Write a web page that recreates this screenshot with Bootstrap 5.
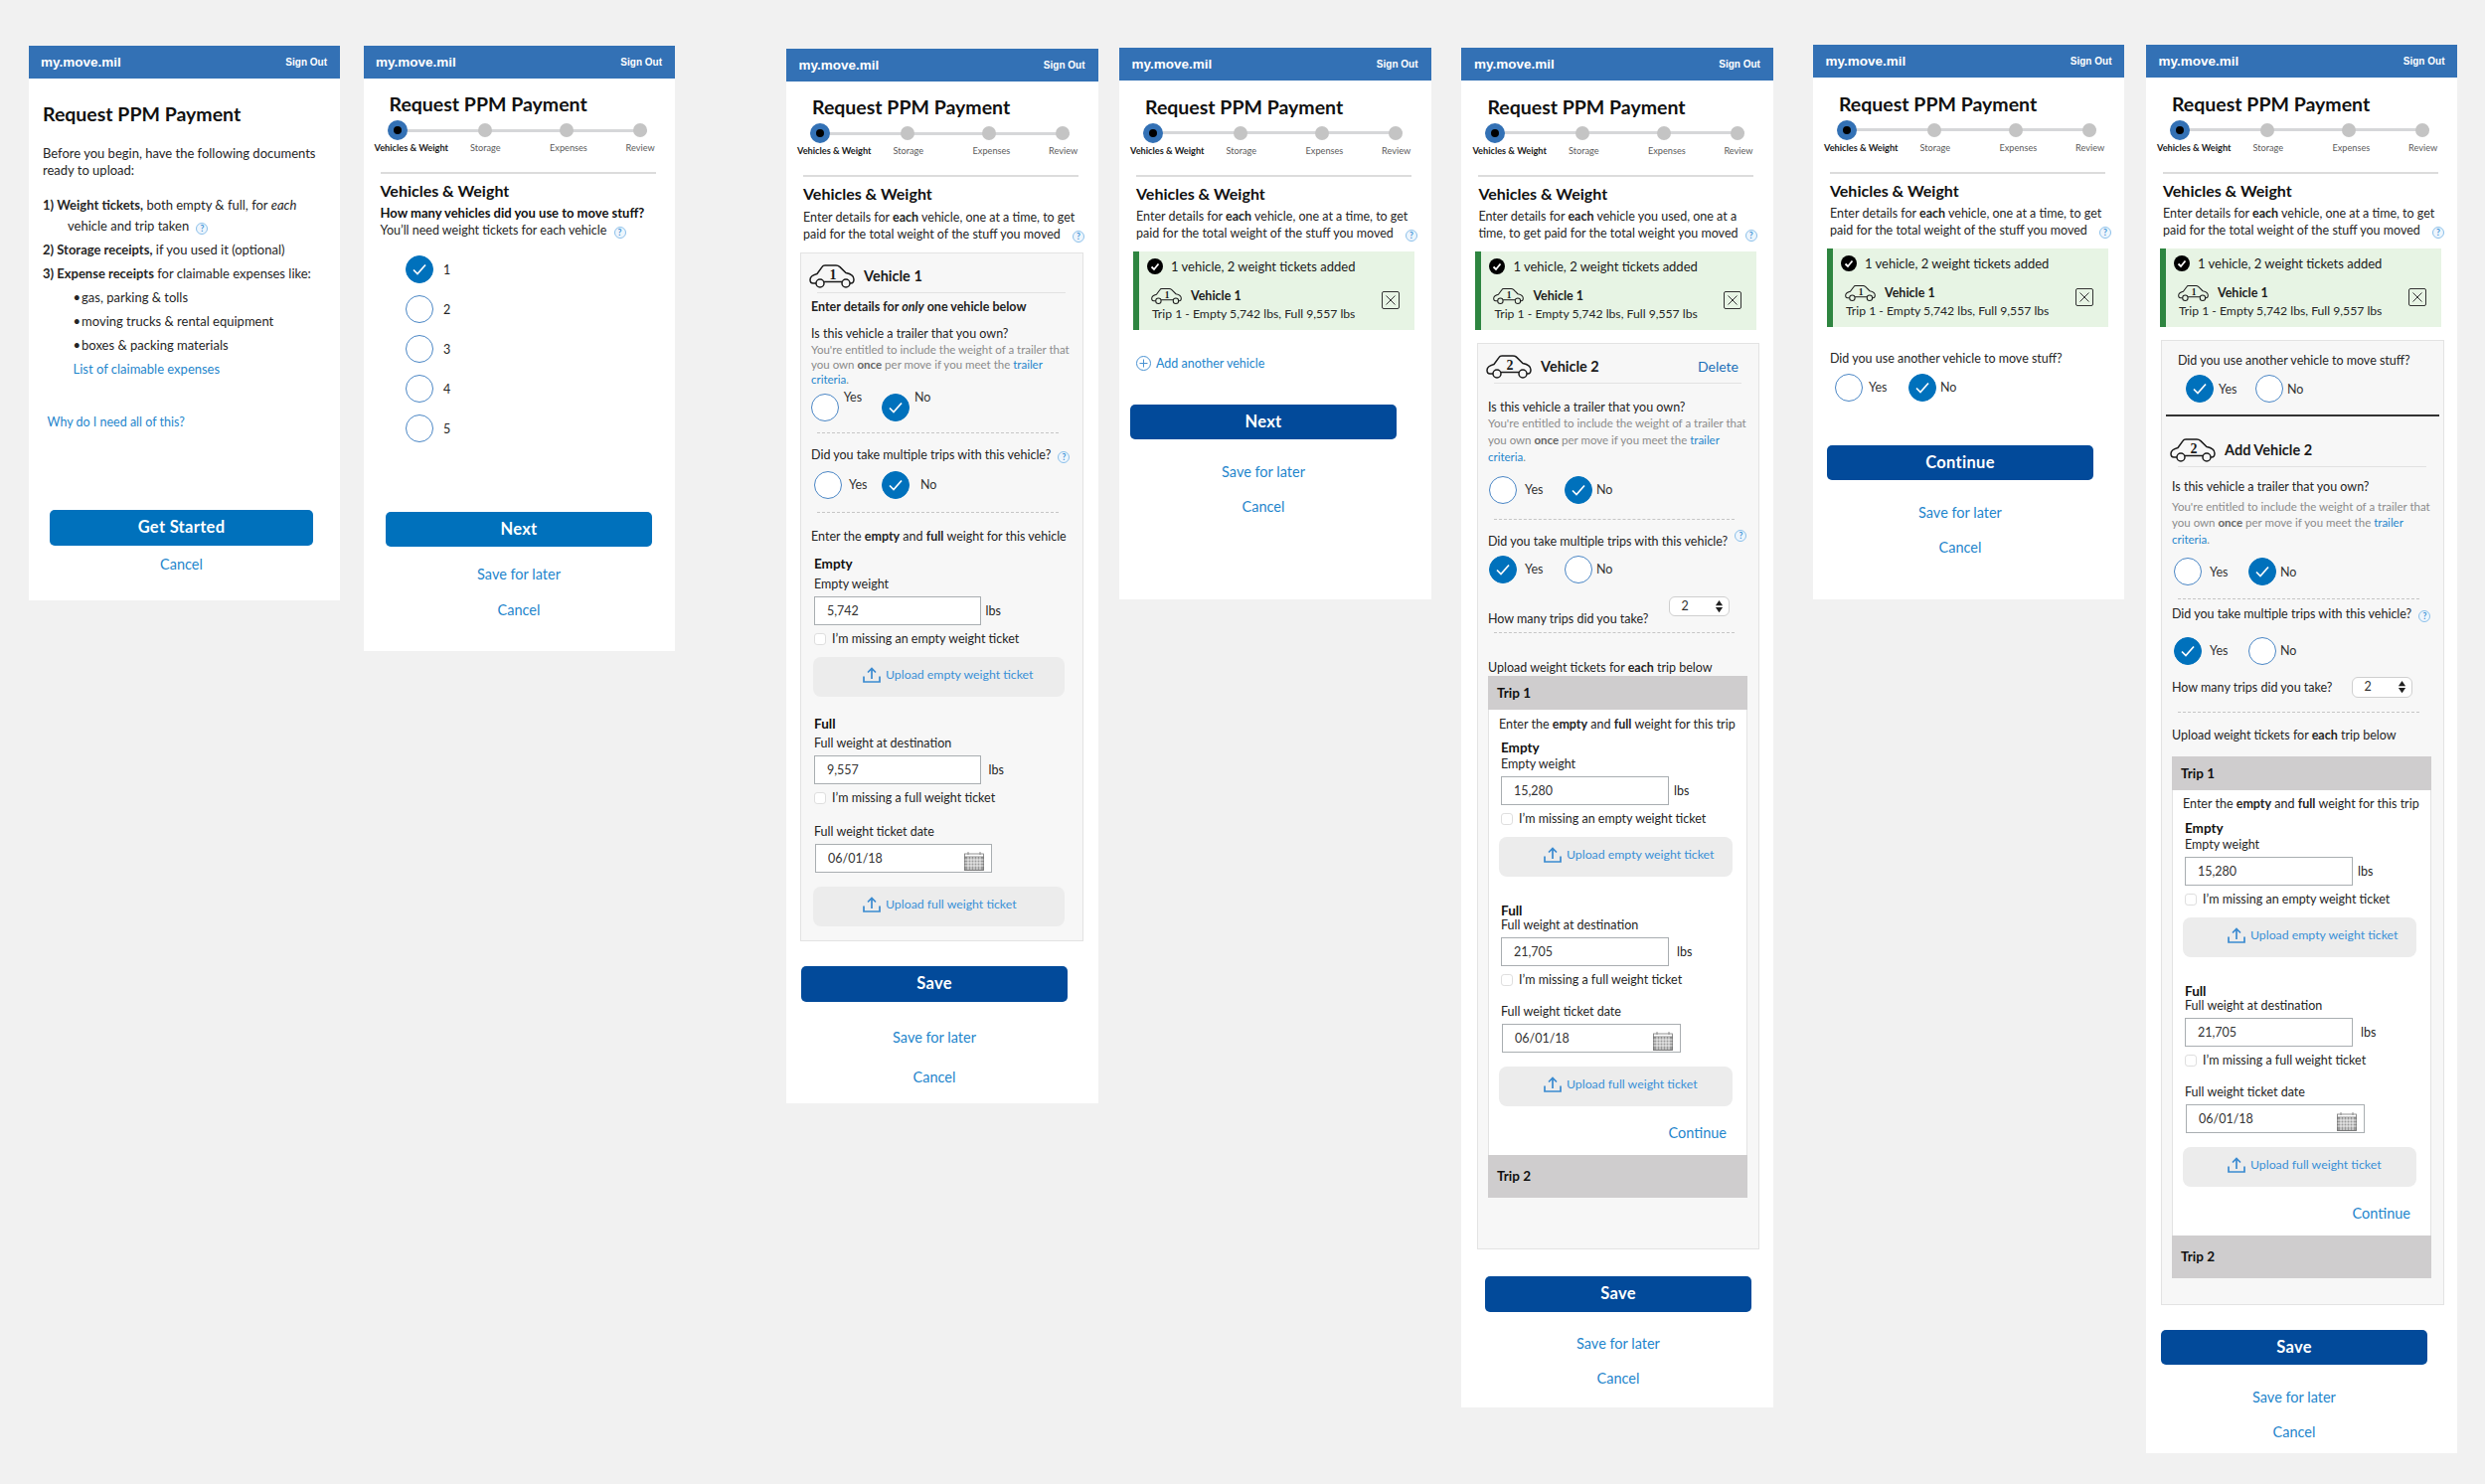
<!DOCTYPE html>
<html lang="en">
<head>
<meta charset="UTF-8">
<title>Request PPM Payment</title>
<link href="https://cdn.jsdelivr.net/npm/bootstrap@5.3.0/dist/css/bootstrap.min.css" rel="stylesheet">
<style>
html, body { background: #f1f1f1; }
body { font-family: Lato, "Noto Sans", sans-serif; font-size: 12.5px; line-height: 17px; color: #252525; }
a { color: #1f86cc; text-decoration: none; }
.board { display: flex; align-items: flex-start; width: 2500px; height: 1493px; overflow: hidden; }
.phone { flex: none; width: 313.5px; background: #fff; }
#s1 { margin: 46px 0 0 28.5px; min-height: 558px; }
#s2 { margin: 45.5px 0 0 23.5px; min-height: 609.5px; }
#s3 { margin: 48.5px 0 0 112px; min-height: 1061.5px; }
#s4 { margin: 48px 0 0 21.5px; min-height: 555px; }
#s5 { margin: 48px 0 0 30.9px; min-height: 1368px; }
#s6 { margin: 45px 0 0 40.1px; min-height: 558px; }
#s7 { margin: 45px 0 0 21.5px; min-height: 1417px; }
.topbar { height: 33px; background: #3371b5; padding: 0 13px 0 12.5px; font-family: "Liberation Sans", Arial, sans-serif; font-weight: 700; flex-wrap: nowrap; }
.brand-txt { color: #fff; font-size: 13.5px; }
.out-txt { color: #fff; font-size: 10px; }
.pay-title { font-size: 19.5px; line-height: 24px; font-weight: 700; margin: 14.5px 0 0 26px; color: #111; }
.steps { display: flex; align-items: center; height: 20px; width: 261px; margin: 4px 0 0 24px; background: linear-gradient(#d6d7d9, #d6d7d9) center / 100% 3px no-repeat; }
.node { flex: none; width: 14px; height: 14px; border-radius: 50%; background: #c4c4c4; }
.node-a { width: 20px; height: 20px; background: #000; border: 6px solid #3371b5; }
.node-b { margin-left: 71px; }
.node-c { margin-left: 68px; }
.node-d { margin-left: 60px; }
.step-names { display: flex; margin: 2px 0 0 11px; font-size: 9.2px; line-height: 12px; color: #5b5b5b; }
.step-names b { width: 96.5px; color: #1b1b1b; }
.step-names span:nth-child(2) { width: 80px; }
.step-names span:nth-child(3) { width: 76.5px; }
.rule-top { margin: 18px 19.5px 0 17px; height: 2px; background: #dcdcdc; }
.sec-title { font-size: 16px; line-height: 20px; font-weight: 700; margin: 7px 0 0 17px; color: #111; }
.sec-text { margin: 4.5px 0 0 17px; width: 290px; }
.hint { display: inline-flex; align-items: center; justify-content: center; width: 12px; height: 12px; margin-left: 4px; border: 1px solid #8cc0ea; border-radius: 50%; color: #3e93d6; font-size: 8.5px; line-height: 1; font-weight: 700; vertical-align: -1px; background: #eef6fd; }
.hint-gap { margin-left: 9px; }
.hint-up { position: relative; top: -8px; }

/* start screen */
.intro-title { margin: 24px 0 0 14.5px; }
.intro-text { margin: 19px 0 0 14.5px; width: 290px; font-size: 13px; }
.intro-list { list-style: none; margin: 18px 0 0 14.5px; padding: 0; font-size: 13px; }
.intro-list li { margin-bottom: 7px; }
.intro-list .wrap-line { display: block; margin: 3.5px 0 0 25px; }
.sub-list { margin: 0 0 0 45px; font-size: 13px; }
.sub-list p { margin: 0 0 7px; }
.sub-list p::before { content: "\2022"; margin-right: 1px; }
.why-link { display: block; margin: 36px 0 0 19px; }
.go-btn.s1-go { margin: 80.5px 0 0 21.5px; width: 265px; }
.s1-cancel { display: block; margin: 10.5px 0 0 21.5px; width: 265px; text-align: center; font-size: 14.5px; }

/* vehicle count */
.s2-q { margin: 4px 0 0 17px; }
.s2-q b { color: #111; font-size: 13px; }
.count-list { margin: 17px 0 0 42.5px; }
.count-item { display: flex; align-items: center; gap: 10px; height: 28px; margin-bottom: 12px; }

/* radios */
.form-check-input.pick { width: 28px; height: 28px; margin: 0; flex: none; float: none; border: 1.5px solid #4a86c5; background-color: #fff; }
.form-check-input.pick:checked { background-color: #0071bc; border-color: #0071bc; background-size: 16px; background-image: url("data:image/svg+xml,%3csvg xmlns='http://www.w3.org/2000/svg' viewBox='0 0 16 16'%3e%3cpath fill='none' stroke='%23fff' stroke-width='1.7' d='M2 8.5l4 4 8-9'/%3e%3c/svg%3e"); }
.choices { display: flex; align-items: center; }
.choice { display: flex; align-items: center; flex: none; color: #333; }
.cg-v1a { margin: 6.5px 0 0 9.7px; }
.cg-v1a .choice:first-child { width: 71.3px; gap: 5px; }
.cg-v1a .choice span { align-self: flex-start; margin-top: -5px; }
.cg-v1a .choice:last-child { gap: 5px; }
.cg-v1b { margin: 7.5px 0 0 13px; }
.cg-v1b .choice:first-child { width: 68px; gap: 7px; }
.cg-v1b .choice:last-child { gap: 11px; }
.cg-v2 { margin: 10.5px 0 0 11px; }
.cg-v2 .choice:first-child { width: 76px; gap: 8px; }
.cg-v2 .choice:last-child { gap: 4px; }
.cg-v2b { margin-top: 5.6px; }
.cg-bare { margin: 6.5px 0 0 22px; }
.cg-bare .choice:first-child { width: 74px; gap: 6px; }
.cg-bare .choice:last-child { gap: 4px; }
.cg-q { margin: 6.5px 0 0 24px; }
.cg-q .choice:first-child { width: 70px; gap: 5px; }
.cg-q .choice:last-child { gap: 4px; }
.cg-a7 { margin: 9.5px 0 0 12px; }
.cg-a7 .choice:first-child { width: 75px; gap: 8px; }
.cg-a7 .choice:last-child { gap: 4px; }
.cg-a7b { margin-top: 14.5px; }

/* added vehicle summary */
.added { width: 283px; height: 79px; margin: 9.5px 0 0 14px; padding: 7px 15px 0 8px; background: #e7f4e4; border-left: 6px solid #2e8540; }
.added-head { display: flex; align-items: center; gap: 8px; font-size: 13px; color: #1b1b1b; }
.added-body { display: flex; justify-content: space-between; margin-top: 12px; }
.added-car { display: flex; align-items: center; gap: 9px; height: 18px; margin-left: 4px; font-weight: 700; color: #1b1b1b; }
.added-car .car { width: 31px; height: 18px; }
.added-trip { margin: 1px 0 0 5px; font-size: 12.2px; line-height: 16px; white-space: nowrap; }
.x-box { flex: none; margin-top: 4px; }

/* vehicle form */
.veh-box { margin-top: 10.5px; width: 285px; background: #f7f7f7; border: 1px solid #e3e3e3; }
.s3-box { margin-left: 14px; padding-bottom: 13.5px; }
.s5-box { margin: 13.5px 0 0 15.6px; width: 284px; height: 912px; }
.s7-box { margin: 13px 0 0 15px; height: 971px; }
.veh-row { display: flex; align-items: center; height: 24px; margin: 10.5px 0 0 8px; gap: 9px; font-size: 14.5px; font-weight: 700; color: #1b1b1b; }
.car { width: 46px; height: 24px; flex: none; }
.del-link { margin-left: auto; margin-right: 20px; font-size: 14px; font-weight: 400; color: #1c6fb8; }
.rule-soft { height: 1.5px; margin: 4px 17px 0 16px; background: #e2e2e2; }
.only-txt { margin: 5px 0 0 10px; font-weight: 700; color: #222; }
.qline { margin: 9.5px 0 0 10px; white-space: nowrap; }
.s5-q1 { margin-top: 15px; }
.note { margin: 0 0 0 10px; width: 268px; font-size: 11.5px; line-height: 15.3px; color: #8b8b8b; }
.note b { color: #666; }
.note-lg { line-height: 16.7px; }
.dash { height: 0; margin: 11px 24px 0 16px; border-top: 1px dashed #c6c6c6; }
.dash-wide { margin-top: 15px; }
.dash-13 { margin-top: 13px; }
.dash-5 { margin-top: 5px; }
.q-next { margin-top: 13px; }
.q-v2 { margin-top: 13px; }
.q-a7 { margin-top: 5.5px; }
.q-lead { margin-top: 15px; }
.count-row { display: flex; align-items: flex-end; margin: 13px 0 0 10px; }
.count-row .form-select { width: 61px; height: 20.5px; margin: 0 0 11px 21px; padding: 0 0 0 11px; font-size: 12.5px; line-height: 18px; border: 1px solid #cfcfcf; color: #333; background-color: #fff; background-position: right 5px center; background-size: 9px; background-image: url("data:image/svg+xml,%3csvg xmlns='http://www.w3.org/2000/svg' viewBox='0 0 10 16'%3e%3cpath fill='%23222' d='M5 1l4 6H1zM5 15l4-6H1z'/%3e%3c/svg%3e"); }
.count-a7 { align-items: center; margin-top: 12.5px; }
.count-a7 .form-select { margin: 0 0 0 20px; }
.up-lead { margin: 26px 0 0 10px; }
.up-a7 { margin-top: 14px; }
.dash-a7 { margin-top: 14.5px; }

/* trip panels */
.trip-wrap { margin-left: 10px; width: 261px; }
.trip-bar { height: 34px; padding-left: 9px; line-height: 34px; font-size: 13.5px; font-weight: 700; color: #111; background: #cfcdce; }
.trip-bar2 { height: 43px; line-height: 43px; margin-top: 0; }
.trip-body { background: #fff; border: solid #e3e3e3; border-width: 0 1px; padding-bottom: 13px; }
.trip-lead { margin: 0; padding: 5.5px 0 0 10px; white-space: nowrap; }
.a7-up { margin-top: 12.5px; }
.cont-link { display: block; margin: 18px 20px 0 0; text-align: right; font-size: 14.5px; line-height: 18px; }

/* weight fields */
.wt { padding-left: 13px; }
.wt-head { font-size: 13.5px; line-height: 18px; font-weight: 700; margin: 10px 0 0; color: #111; }
.wt-label { display: block; margin: 4px 0 0; line-height: 16px; }
.wt-in { width: 167.5px; height: 29px; margin-top: 4px; padding: 0 0 0 12px; font-size: 12.5px; border: 1.5px solid #a9aeb1; border-radius: 0; color: #333; background: #fff; }
.lbs { margin: 4px 0 0 5px; }
.lbs-2 { margin-left: 8px; }
.miss { display: flex; align-items: center; gap: 6px; margin-top: 6.5px; line-height: 16px; }
.miss .form-check-input { width: 12px; height: 12px; margin: 0; float: none; flex: none; border: 1px solid #dedede; }
.upload-btn { display: flex; align-items: center; gap: 5px; width: 253px; height: 40px; margin: 9.5px 0 0 -1px; padding: 0 0 4px 50px; font-size: 12.3px; line-height: 16px; color: #3a90d6; background: #ececec; border: 0; border-radius: 8px; }
.upload-btn svg { width: 18px; height: 16px; flex: none; }
.upload-btn-2 { margin-top: 14px; }
.wt-head-2 { margin-top: 18.5px; }
.wt-label-2 { margin-top: 2.6px; }
.date-label { margin-top: 18px; }
.date-in { position: relative; width: 178px; margin-left: 1px; }
.date-in .wt-in { width: 100%; }
.date-in svg { position: absolute; right: 8px; top: 8px; width: 20px; height: 19px; }
.wt-trip { padding-left: 12px; }
.wt-trip .wt-head { margin-top: 6.5px; }
.wt-trip .wt-label { margin-top: 0; }
.wt-trip .wt-in { width: 169px; }
.wt-trip .date-in { width: 180px; }
.wt-trip .date-in .wt-in { width: 100%; }
.wt-trip .upload-btn { width: 235px; margin-top: 10px; margin-left: -2px; padding-left: 45px; }
.wt-trip .upload-btn-2 { margin-top: 14px; }
.wt-trip .wt-head-2 { margin-top: 25px; }
.wt-trip .wt-label-2 { margin-top: -2px; }
.wt-trip .date-label { margin-top: 16px; }
.wt-trip .miss { margin-top: 6px; }

/* footer actions */
.go-btn { display: block; width: 268px; height: 35.5px; padding: 0; font-size: 16.5px; line-height: 35.5px; font-weight: 700; color: #fff; border: 0; border-radius: 5px; letter-spacing: .3px; }
.go-btn:hover { color: #fff; }
.go-blue { background: #0071bc; }
.go-navy { background: #024a9a; }
.foot { width: 268px; }
.foot a { display: block; text-align: center; font-size: 14.5px; line-height: 18px; }
.foot-s2 { margin: 69.5px 0 0 22.5px; }
.foot-s2 .later { margin-top: 18.6px; }
.foot-s2 .drop { margin-top: 18.4px; }
.foot-s3 { margin: 25.4px 0 0 15px; }
.foot-s3 .later { margin-top: 27px; }
.foot-s3 .drop { margin-top: 22px; }
.foot-s4 { margin: 33px 0 0 11px; }
.foot-s4 .later, .foot-s5 .later, .foot-s6 .later, .foot-s7 .later { margin-top: 23.6px; }
.foot-s4 .drop, .foot-s5 .drop, .foot-s6 .drop, .foot-s7 .drop { margin-top: 17px; }
.foot-s5 { margin: 27px 0 0 23.6px; }
.foot-s6 { margin: 44px 0 0 14px; }
.foot-s7 { margin: 25px 0 0 15px; }
.add-link { display: flex; align-items: center; gap: 5px; margin: 25px 0 0 17px; }
.add-link svg { width: 15px; height: 15px; }
.s6-q { margin: 23.5px 0 0 17px; }
.s7-q { margin: 11px 0 0 16px; }
.rule-dark { height: 1.5px; margin: 12px 4px 0 4px; background: #333; }
.s7-car { margin-top: 22px; }
.s7-q2 { margin-top: 10.5px; }
.note-a7 { margin-top: 4px; }
</style>
</head>
<body>
<div class="board" id="board"></div>

<script src="https://cdn.jsdelivr.net/npm/bootstrap@5.3.0/dist/js/bootstrap.bundle.min.js"></script>
<script>
    const bar = `<nav class="navbar topbar"><a class="brand-txt" href="#">my.move.mil</a><a class="out-txt" href="#">Sign Out</a></nav>`;

    const hint = (cls = '') => `<span class="hint ${cls}">?</span>`;

    const header = `
        <h1 class="pay-title">Request PPM Payment</h1>
        <div class="steps"><span class="node node-a"></span><span class="node node-b"></span><span class="node node-c"></span><span class="node node-d"></span></div>
        <div class="step-names"><b>Vehicles &amp; Weight</b><span>Storage</span><span>Expenses</span><span>Review</span></div>
        <div class="rule-top"></div>
        <h2 class="sec-title">Vehicles &amp; Weight</h2>`;

    const sameText = `<p class="sec-text">Enter details for <b>each</b> vehicle, one at a time, to get paid for the total weight of the stuff you moved ${hint('hint-gap')}</p>`;

    function car(n) {
        return `<svg class="car" viewBox="0 0 46 24" fill="none" stroke="#1b1b1b" stroke-width="1.5"><path d="M7 19H4C2 19 1 17.5 1 15.5 1 12 4 10.5 8 9.5L13 2.7C13.6 1.6 14.6 1 16 1H27C28.6 1 29.8 1.5 31 2.6L37 8.6C41.5 9.5 45 11 45 15 45 17.5 44 19 42 19H41"/><circle cx="11" cy="19" r="4"/><circle cx="37" cy="19" r="4"/><path d="M15 17.5H33"/><text x="24" y="14.5" text-anchor="middle" font-family="Liberation Serif, serif" font-weight="700" font-size="14" fill="#1b1b1b" stroke="none">${n}</text></svg>`;
    }

    const upIcon = `<svg viewBox="0 0 18 16" fill="none" stroke="#3a8ad0" stroke-width="1.7"><path d="M1 9.5V15H17V9.5M9 12V1.5M5 5.5L9 1.5 13 5.5"/></svg>`;
    const calIcon = `<svg viewBox="0 0 20 19" fill="#9a9a9a" stroke="#777" stroke-width=".8"><rect x=".5" y="2" width="19" height="16.5" fill="#fff"/><rect x=".5" y="5" width="19" height="13.5"/><path stroke="#fff" d="M.5 8h19M.5 11h19M.5 14h19M4 5v13M7 5v13M10 5v13M13 5v13M16 5v13"/><path d="M4 0v3M16 0v3"/></svg>`;
    const xIcon = `<svg class="x-box" width="18" height="18" viewBox="0 0 18 18" fill="none" stroke="#333"><rect x=".5" y=".5" width="17" height="17" rx="1.5"/><path d="M4.5 4.5l9 9M13.5 4.5l-9 9"/></svg>`;
    const okIcon = `<svg width="16" height="16" viewBox="0 0 16 16"><circle cx="8" cy="8" r="8" fill="#000"/><path d="M4.5 8.5l2.5 2.5 4.5-5.5" fill="none" stroke="#fff" stroke-width="1.8"/></svg>`;
    const plusIcon = `<svg viewBox="0 0 15 15" fill="none" stroke="#4a92d2"><circle cx="7.5" cy="7.5" r="7"/><path d="M7.5 3.5v8M3.5 7.5h8"/></svg>`;

    let group = 0;
    function choices(cls, yes) {
        group++;
        const opt = (name, on) => `<label class="choice"><input class="form-check-input pick" type="radio" name="g${group}" ${on ? 'checked' : ''}><span>${name}</span></label>`;
        return `<div class="choices ${cls}">${opt('Yes', yes)}${opt('No', !yes)}</div>`;
    }

    const added = `
        <div class="added">
            <div class="added-head">${okIcon}<span>1 vehicle, 2 weight tickets added</span></div>
            <div class="added-body"><div><div class="added-car">${car(1)}<span>Vehicle 1</span></div><div class="added-trip">Trip 1 - Empty 5,742 lbs, Full 9,557 lbs</div></div>${xIcon}</div>
        </div>`;

    const note = (cls = '') => `<p class="note ${cls}">You're entitled to include the weight of a trailer that you own <b>once</b> per move if you meet the <a href="#">trailer criteria</a>.</p>`;

    function weight(first, second, cls = '') {
        return `
        <div class="wt ${cls}">
            <h3 class="wt-head">Empty</h3>
            <label class="wt-label">Empty weight</label>
            <div class="d-flex align-items-center"><input class="form-control wt-in" value="${first}"><span class="lbs">lbs</span></div>
            <div class="miss"><input class="form-check-input" type="checkbox"><span>I’m missing an empty weight ticket</span></div>
            <button class="btn upload-btn">${upIcon}<span>Upload empty weight ticket</span></button>
            <h3 class="wt-head wt-head-2">Full</h3>
            <label class="wt-label wt-label-2">Full weight at destination</label>
            <div class="d-flex align-items-center"><input class="form-control wt-in" value="${second}"><span class="lbs lbs-2">lbs</span></div>
            <div class="miss"><input class="form-check-input" type="checkbox"><span>I’m missing a full weight ticket</span></div>
            <label class="wt-label date-label">Full weight ticket date</label>
            <div class="date-in"><input class="form-control wt-in" value="06/01/18">${calIcon}</div>
            <button class="btn upload-btn upload-btn-2">${upIcon}<span>Upload full weight ticket</span></button>
        </div>`;
    }

    const trips = `
        <div class="trip-wrap">
            <div class="trip-bar">Trip 1</div>
            <div class="trip-body">
                <p class="trip-lead">Enter the <b>empty</b> and <b>full</b> weight for this trip</p>
                ${weight('15,280', '21,705', 'wt-trip')}
                <a class="cont-link" href="#">Continue</a>
            </div>
            <div class="trip-bar trip-bar2">Trip 2</div>
        </div>`;

    function foot(cls, label, colour) {
        return `
        <div class="foot ${cls}">
            <button class="btn go-btn ${colour}">${label}</button>
            <a class="later" href="#">Save for later</a>
            <a class="drop" href="#">Cancel</a>
        </div>`;
    }

    const screens = [
        // 1: intro
        `${bar}
        <h1 class="pay-title intro-title">Request PPM Payment</h1>
        <p class="intro-text">Before you begin, have the following documents ready to upload:</p>
        <ul class="intro-list">
            <li><b>1) Weight tickets,</b> both empty &amp; full, for <i>each</i><span class="wrap-line">vehicle and trip taken ${hint()}</span></li>
            <li><b>2) Storage receipts,</b> if you used it (optional)</li>
            <li><b>3) Expense receipts</b> for claimable expenses like:</li>
        </ul>
        <div class="sub-list">
            <p>gas, parking &amp; tolls</p>
            <p>moving trucks &amp; rental equipment</p>
            <p>boxes &amp; packing materials</p>
            <a href="#">List of claimable expenses</a>
        </div>
        <a class="why-link" href="#">Why do I need all of this?</a>
        <button class="btn go-btn go-blue s1-go">Get Started</button>
        <a class="s1-cancel" href="#">Cancel</a>`,

        // 2: how many vehicles
        `${bar}${header}
        <p class="s2-q"><b>How many vehicles did you use to move stuff?</b><br>You’ll need weight tickets for each vehicle ${hint()}</p>
        <div class="count-list">
            ${[1, 2, 3, 4, 5].map(n => `<label class="count-item"><input class="form-check-input pick" type="radio" name="count" ${n === 1 ? 'checked' : ''}><span>${n}</span></label>`).join('')}
        </div>
        ${foot('foot-s2', 'Next', 'go-blue')}`,

        // 3: vehicle 1 form
        `${bar}${header}${sameText}
        <div class="veh-box s3-box">
            <div class="veh-row">${car(1)}<span>Vehicle 1</span></div>
            <div class="rule-soft"></div>
            <p class="only-txt">Enter details for <i>only</i> one vehicle below</p>
            <p class="qline">Is this vehicle a trailer that you own?</p>
            ${note()}
            ${choices('cg-v1a', false)}
            <div class="dash"></div>
            <p class="qline q-next">Did you take multiple trips with this vehicle? ${hint()}</p>
            ${choices('cg-v1b', false)}
            <div class="dash dash-13"></div>
            <p class="qline q-lead">Enter the <b>empty</b> and <b>full</b> weight for this vehicle</p>
            ${weight('5,742', '9,557')}
        </div>
        ${foot('foot-s3', 'Save', 'go-navy')}`,

        // 4: one vehicle added
        `${bar}${header}${sameText}${added}
        <a class="add-link" href="#">${plusIcon}<span>Add another vehicle</span></a>
        ${foot('foot-s4', 'Next', 'go-navy')}`,

        // 5: vehicle 2 form
        `${bar}${header}
        <p class="sec-text">Enter details for <b>each</b> vehicle you used, one at a time, to get paid for the total weight you moved ${hint()}</p>
        ${added}
        <div class="veh-box s5-box">
            <div class="veh-row">${car(2)}<span>Vehicle 2</span><a class="del-link" href="#">Delete</a></div>
            <div class="rule-soft"></div>
            <p class="qline s5-q1">Is this vehicle a trailer that you own?</p>
            ${note('note-lg')}
            ${choices('cg-v2', false)}
            <div class="dash dash-wide"></div>
            <p class="qline q-v2">Did you take multiple trips with this vehicle? ${hint('hint-up')}</p>
            ${choices('cg-v2 cg-v2b', true)}
            <div class="count-row"><span>How many trips did you take?</span><select class="form-select"><option>2</option></select></div>
            <div class="dash dash-5"></div>
            <p class="up-lead">Upload weight tickets for <b>each</b> trip below</p>
            ${trips}
        </div>
        ${foot('foot-s5', 'Save', 'go-navy')}`,

        // 6: another vehicle?
        `${bar}${header}${sameText}${added}
        <p class="s6-q">Did you use another vehicle to move stuff?</p>
        ${choices('cg-bare', false)}
        ${foot('foot-s6', 'Continue', 'go-navy')}`,

        // 7: add vehicle 2 form
        `${bar}${header}${sameText}${added}
        <div class="veh-box s7-box">
            <p class="s7-q">Did you use another vehicle to move stuff?</p>
            ${choices('cg-q', true)}
            <div class="rule-dark"></div>
            <div class="veh-row s7-car">${car(2)}<span>Add Vehicle 2</span></div>
            <div class="rule-soft"></div>
            <p class="qline s7-q2">Is this vehicle a trailer that you own?</p>
            ${note('note-lg note-a7')}
            ${choices('cg-a7', false)}
            <div class="dash dash-13"></div>
            <p class="qline q-a7">Did you take multiple trips with this vehicle? ${hint()}</p>
            ${choices('cg-a7 cg-a7b', true)}
            <div class="count-row count-a7"><span>How many trips did you take?</span><select class="form-select"><option>2</option></select></div>
            <div class="dash dash-a7"></div>
            <p class="up-lead up-a7">Upload weight tickets for <b>each</b> trip below</p>
            <div class="a7-up">${trips}</div>
        </div>
        ${foot('foot-s7', 'Save', 'go-navy')}`
    ];

    document.getElementById('board').innerHTML = screens.map((html, i) => `<section class="phone" id="s${i + 1}">${html}</section>`).join('');
</script>
</body>
</html>
